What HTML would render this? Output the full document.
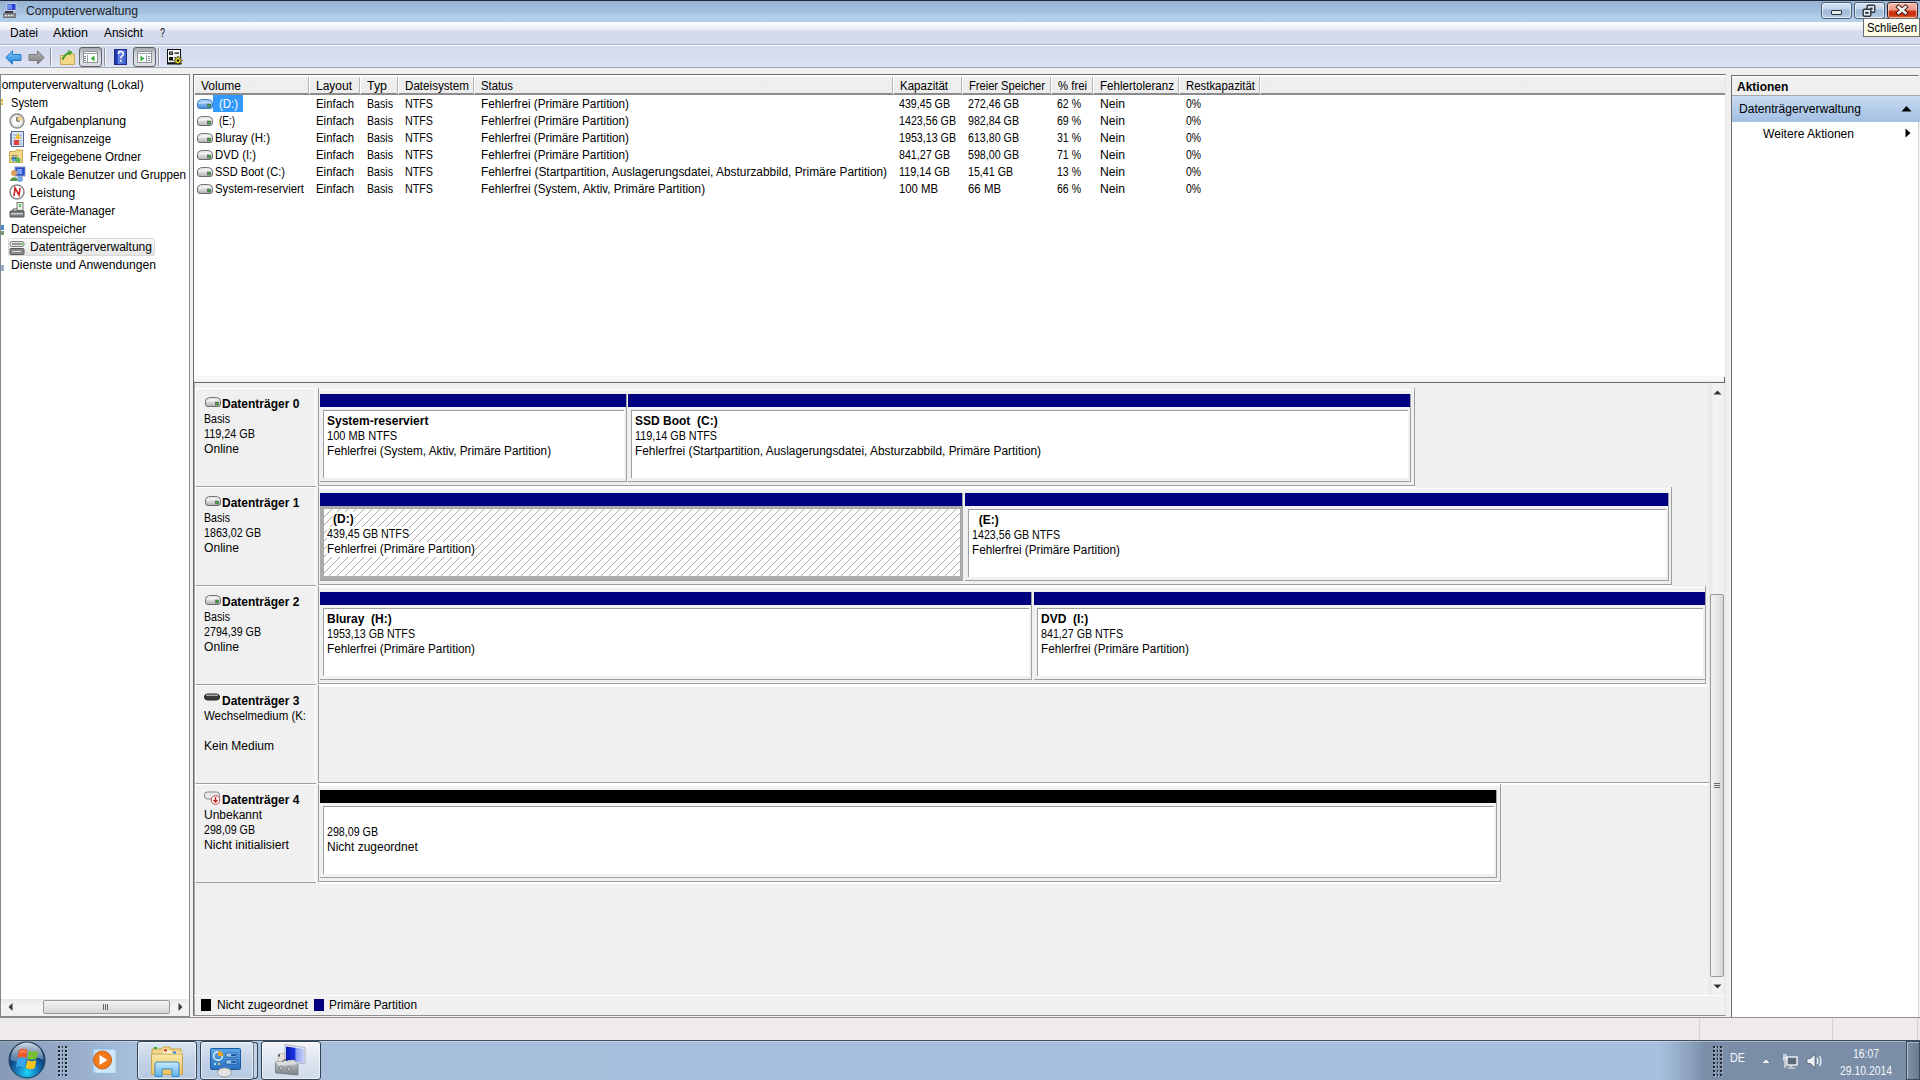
<!DOCTYPE html><html><head><meta charset="utf-8"><title>Computerverwaltung</title><style>
*{margin:0;padding:0;box-sizing:border-box}
html,body{width:1920px;height:1080px;overflow:hidden}
body{position:relative;background:#f0f0f0;font-family:"Liberation Sans",sans-serif;font-size:12px;color:#000}
.a{position:absolute}
.t{position:absolute;line-height:18px;white-space:nowrap}
.b{font-weight:bold}
svg{position:absolute;overflow:visible}
</style></head><body>
<div class="a" style="left:0px;top:0px;width:1920px;height:22px;background:linear-gradient(#1b2b3b 0,#1b2b3b 1px,#9bb3cf 1px,#98b6d5 4px,#a6c2df 13px,#b2cde8 16px,#b4cfe9 22px)"></div>
<svg style="left:2px;top:3px" width="15" height="15" viewBox="0 0 15 15"><rect x="5" y="0.5" width="9" height="7" fill="#2b3fd0" stroke="#c8d0e8" stroke-width="1"/><rect x="6" y="1.5" width="4" height="5" fill="#6d8cf0"/><path d="M3 8 h8 v3 h-8z" fill="#3a3a3a"/><rect x="1.5" y="10.5" width="12" height="4" fill="#8e9499" stroke="#6f7478"/><rect x="3" y="12" width="1.5" height="1" fill="#fff"/><rect x="6" y="12" width="1.5" height="1" fill="#fff"/><rect x="9" y="12" width="1.5" height="1" fill="#fff"/></svg>
<div class="t " style="left:26px;top:2px;transform:scaleX(1.0116);transform-origin:0 0;color:#1b1e2a">Computerverwaltung</div>
<div class="a" style="left:1821px;top:2px;width:31px;height:17px;background:linear-gradient(#d7e4f2 0,#c1d4ea 6px,#a4bcd9 7px,#a7bfdb 11px,#c3d6ec 16px);border:1px solid #4d5f78;border-radius:3px;box-shadow:inset 0 0 0 1px rgba(255,255,255,.55)"></div>
<div class="a" style="left:1854px;top:2px;width:31px;height:17px;background:linear-gradient(#d7e4f2 0,#c1d4ea 6px,#a4bcd9 7px,#a7bfdb 11px,#c3d6ec 16px);border:1px solid #4d5f78;border-radius:3px;box-shadow:inset 0 0 0 1px rgba(255,255,255,.55)"></div>
<div class="a" style="left:1887px;top:2px;width:31px;height:17px;background:linear-gradient(#f4b8aa 0,#eb9a86 7px,#d63a18 8px,#cc2e10 12px,#e88a40 16px);border:1px solid #3c1d1d;border-radius:3px;box-shadow:inset 0 0 0 1px rgba(255,255,255,.55)"></div>
<div class="a" style="left:1831px;top:10px;width:11px;height:5px;background:#e9ecef;border:1px solid #2b3540;border-radius:1px"></div>
<svg style="left:1862px;top:4px" width="14" height="13" viewBox="0 0 14 13"><rect x="5.2" y="1.2" width="7.6" height="7" rx="1.2" fill="#e9ecef" stroke="#2b3540" stroke-width="1.4"/><rect x="8" y="3.6" width="2.6" height="2.2" fill="#2b3540"/><rect x="1.2" y="5.2" width="7.6" height="7" rx="1.2" fill="#e9ecef" stroke="#2b3540" stroke-width="1.4"/><rect x="3.2" y="7.8" width="3.4" height="2" fill="#2b3540"/></svg>
<svg style="left:1895px;top:4px" width="14" height="12" viewBox="0 0 14 12"><path d="M3.5 3 L10.5 9 M10.5 3 L3.5 9" stroke="#4a1810" stroke-width="4.4" stroke-linecap="square"/><path d="M3.5 3 L10.5 9 M10.5 3 L3.5 9" stroke="#f4f4f4" stroke-width="2.4" stroke-linecap="square"/></svg>
<div class="a" style="left:0px;top:22px;width:1920px;height:23px;background:linear-gradient(#fbfcfe 0,#f3f5fa 4px,#e6eaf5 8px,#d6dcee 9px,#d4daee 22px,#a9aeb8 22px)"></div>
<div class="t " style="left:10px;top:24px;">Datei</div>
<div class="t " style="left:53px;top:24px;transform:scaleX(1.0497);transform-origin:0 0;">Aktion</div>
<div class="t " style="left:104px;top:24px;transform:scaleX(0.9913);transform-origin:0 0;">Ansicht</div>
<div class="t " style="left:160px;top:24px;transform:scaleX(0.7494);transform-origin:0 0;">?</div>
<div class="a" style="left:0px;top:45px;width:1920px;height:23px;background:linear-gradient(#ffffff 0,#ffffff 1px,#d4daed 1px,#d7ddf0 12px,#dee4f5 22px,#a3a7b0 22px)"></div>
<svg style="left:5px;top:50px" width="17" height="15" viewBox="0 0 17 15"><defs><linearGradient id="gb" x1="0" y1="0" x2="0" y2="1"><stop offset="0" stop-color="#7fd0f8"/><stop offset="1" stop-color="#1c7fd6"/></linearGradient></defs><path d="M0.8 7.5 L7.5 0.8 V4.5 H16 V10.5 H7.5 V14.2 Z" fill="url(#gb)" stroke="#2a78c8" stroke-width="1"/></svg>
<svg style="left:28px;top:50px" width="17" height="15" viewBox="0 0 17 15"><defs><linearGradient id="gf" x1="0" y1="0" x2="0" y2="1"><stop offset="0" stop-color="#b8b8b8"/><stop offset="1" stop-color="#7c7c7c"/></linearGradient></defs><path d="M16.2 7.5 L9.5 0.8 V4.5 H1 V10.5 H9.5 V14.2 Z" fill="url(#gf)" stroke="#7a7a7a" stroke-width="1"/></svg>
<div class="a" style="left:50px;top:48px;width:1px;height:18px;background:#8e939c"></div>
<div class="a" style="left:51px;top:48px;width:1px;height:18px;background:#f4f6fb"></div>
<div class="a" style="left:104px;top:48px;width:1px;height:18px;background:#8e939c"></div>
<div class="a" style="left:105px;top:48px;width:1px;height:18px;background:#f4f6fb"></div>
<div class="a" style="left:158px;top:48px;width:1px;height:18px;background:#8e939c"></div>
<div class="a" style="left:159px;top:48px;width:1px;height:18px;background:#f4f6fb"></div>
<svg style="left:60px;top:50px" width="16" height="15" viewBox="0 0 16 15"><path d="M0.5 5.5 H6 L7 4 H14.5 V14.5 H0.5Z" fill="#f3d88a" stroke="#c8a850"/><path d="M2 9 C4 5 6 3 9 2 L8 0.5 L12 2 L9.5 5 L9.5 3.5 C7 4 5 6 3 10Z" fill="#3fae2a" stroke="#2b8a1c" stroke-width="0.6"/></svg>
<div class="a" style="left:79px;top:47px;width:23px;height:20px;background:linear-gradient(#a3a7ae,#c9ccd2 5px,#dfe1e5 14px,#d6d8dc);border:1px solid #5f636b;border-radius:3px"></div>
<div class="a" style="left:83px;top:51px;width:15px;height:12px;background:#fff;border:1px solid #8f9499"></div>
<div class="a" style="left:84px;top:53px;width:13px;height:1px;background:#9aa0a6"></div>
<div class="a" style="left:87px;top:55px;width:1px;height:7px;background:#9aa0a6"></div>
<svg style="left:90px;top:55px" width="5" height="7" viewBox="0 0 5 7"><path d="M4.5 0.5 L0.5 3.5 L4.5 6.5Z" fill="#3cae3c"/></svg>
<div class="a" style="left:84px;top:56px;width:2px;height:1px;background:#7d8388"></div>
<div class="a" style="left:84px;top:58px;width:2px;height:1px;background:#7d8388"></div>
<div class="a" style="left:84px;top:60px;width:2px;height:1px;background:#7d8388"></div>
<div class="a" style="left:133px;top:47px;width:23px;height:20px;background:linear-gradient(#a3a7ae,#c9ccd2 5px,#dfe1e5 14px,#d6d8dc);border:1px solid #5f636b;border-radius:3px"></div>
<div class="a" style="left:137px;top:51px;width:15px;height:12px;background:#fff;border:1px solid #8f9499"></div>
<div class="a" style="left:138px;top:53px;width:13px;height:1px;background:#9aa0a6"></div>
<div class="a" style="left:146px;top:55px;width:1px;height:7px;background:#9aa0a6"></div>
<svg style="left:140px;top:55px" width="5" height="7" viewBox="0 0 5 7"><path d="M0.5 0.5 L4.5 3.5 L0.5 6.5Z" fill="#3cae3c"/></svg>
<div class="a" style="left:148px;top:56px;width:2px;height:1px;background:#7d8388"></div>
<div class="a" style="left:148px;top:58px;width:2px;height:1px;background:#7d8388"></div>
<div class="a" style="left:148px;top:60px;width:2px;height:1px;background:#7d8388"></div>
<svg style="left:114px;top:49px" width="13" height="16" viewBox="0 0 13 16"><defs><linearGradient id="hg" x1="0" y1="0" x2="1" y2="0"><stop offset="0" stop-color="#1a2f98"/><stop offset=".25" stop-color="#2a48c0"/><stop offset=".3" stop-color="#6a8ae8"/><stop offset="1" stop-color="#3c5cc8"/></linearGradient></defs><rect x="0.5" y="0.5" width="12" height="15" fill="url(#hg)" stroke="#1c2c88"/><path d="M4.3 5 Q4.3 2.6 6.8 2.6 Q9.3 2.6 9.3 4.9 Q9.3 6.3 7.8 7.2 Q6.9 7.8 6.9 9.4" stroke="#fff" stroke-width="1.5" fill="none"/><circle cx="6.9" cy="12" r="1" fill="#fff"/></svg>
<svg style="left:167px;top:49px" width="17" height="17" viewBox="0 0 17 17"><rect x="0.5" y="0.5" width="13" height="13.5" fill="#f6f6f6" stroke="#111"/><rect x="0" y="13.5" width="14.5" height="2" fill="#111"/><rect x="2" y="2.5" width="4" height="3.5" fill="#111"/><path d="M2.8 3.3 L5.2 5.2 M5.2 3.3 L2.8 5.2" stroke="#fff" stroke-width=".6"/><rect x="7.5" y="3.5" width="4.5" height="1.3" fill="#111"/><rect x="2" y="8" width="4" height="3.5" fill="#111"/><polygon points="15.60,11.50 13.40,12.49 14.25,14.75 11.99,13.90 11.00,16.10 10.01,13.90 7.75,14.75 8.60,12.49 6.40,11.50 8.60,10.51 7.75,8.25 10.01,9.10 11.00,6.90 11.99,9.10 14.25,8.25 13.40,10.51" fill="#f2e628" stroke="#1a1a1a" stroke-width=".7"/><circle cx="11" cy="11.5" r="1.3" fill="#111"/></svg>
<div class="a" style="left:0px;top:74px;width:190px;height:943px;background:#fff;border:1px solid #828790"></div>
<div class="a" style="left:1px;top:75px;width:188px;height:20px;overflow:hidden">
<div class="t " style="left:-8px;top:1px;">Computerverwaltung (Lokal)</div>
</div>
<div class="t " style="left:11px;top:94px;transform:scaleX(0.9250);transform-origin:0 0;">System</div>
<div class="t " style="left:30px;top:112px;transform:scaleX(1.0206);transform-origin:0 0;">Aufgabenplanung</div>
<div class="t " style="left:30px;top:130px;transform:scaleX(0.9486);transform-origin:0 0;">Ereignisanzeige</div>
<div class="t " style="left:30px;top:148px;transform:scaleX(0.9676);transform-origin:0 0;">Freigegebene Ordner</div>
<div class="t " style="left:30px;top:166px;transform:scaleX(0.9746);transform-origin:0 0;">Lokale Benutzer und Gruppen</div>
<div class="t " style="left:30px;top:184px;transform:scaleX(0.9921);transform-origin:0 0;">Leistung</div>
<div class="t " style="left:30px;top:202px;transform:scaleX(0.9656);transform-origin:0 0;">Geräte-Manager</div>
<div class="t " style="left:11px;top:220px;transform:scaleX(0.9693);transform-origin:0 0;">Datenspeicher</div>
<div class="a" style="left:8px;top:238px;width:147px;height:18px;background:linear-gradient(#fafafa,#e6e6e6);border:1px solid #d9d9d9;border-radius:2px"></div>
<div class="t " style="left:30px;top:238px;transform:scaleX(1.0050);transform-origin:0 0;">Datenträgerverwaltung</div>
<div class="t " style="left:11px;top:256px;transform:scaleX(1.0110);transform-origin:0 0;">Dienste und Anwendungen</div>
<div class="a" style="left:1px;top:99px;width:2px;height:3px;background:#e0b830"></div>
<div class="a" style="left:1px;top:103px;width:2px;height:2px;background:#e0b830"></div>
<svg style="left:9px;top:113px" width="16" height="16" viewBox="0 0 16 16"><circle cx="8" cy="8" r="7" fill="#f4f4f4" stroke="#8a8a8a" stroke-width="1.4"/><circle cx="8" cy="8" r="5" fill="#fff" stroke="#d8d8d8"/><path d="M8 4 V8 H11" stroke="#333" stroke-width="1.2" fill="none"/><path d="M9 2.5 A5.5 5.5 0 0 1 13.5 7 L8 8Z" fill="#f4c060" opacity=".7"/></svg>
<svg style="left:10px;top:131px" width="15" height="16" viewBox="0 0 15 16"><rect x="1.5" y="0.5" width="12" height="15" fill="#dfe6f4" stroke="#5a6a90"/><path d="M3 4h9M3 7h9M3 10h9M3 13h9" stroke="#8aa0cc"/><rect x="0" y="2" width="2" height="12" fill="#6b7ca8"/><path d="M8 2 L11 8 H5Z" fill="#f2c22a"/><rect x="4" y="9" width="5" height="5" fill="#e04040"/></svg>
<svg style="left:9px;top:148px" width="16" height="16" viewBox="0 0 16 16"><path d="M0.5 3.5 H6 L7 2 H13.5 V14.5 H0.5Z" fill="#f3d88a" stroke="#c9a84a"/><circle cx="5" cy="11" r="2.5" fill="#4aa0d8"/><circle cx="9" cy="12" r="2.5" fill="#58b858"/><text x="2" y="11" font-size="6" fill="#444" font-family="Liberation Sans">22</text></svg>
<svg style="left:9px;top:166px" width="17" height="17" viewBox="0 0 17 17"><rect x="6" y="1" width="10" height="9" fill="#3050c8" stroke="#8898c8"/><rect x="8" y="3" width="5" height="5" fill="#7aa0f0"/><circle cx="5" cy="7" r="3" fill="#d8a060"/><path d="M1 15 C1 10 9 10 9 15Z" fill="#5a9848"/><circle cx="11" cy="13" r="3" fill="#7aa8d8"/></svg>
<svg style="left:9px;top:184px" width="16" height="16" viewBox="0 0 16 16"><circle cx="8" cy="8" r="7" fill="#fff" stroke="#8a8a8a" stroke-width="1.5"/><path d="M5 12 L6 4 L10 11 L11 4" stroke="#d02020" stroke-width="1.6" fill="none"/></svg>
<svg style="left:9px;top:202px" width="16" height="16" viewBox="0 0 16 16"><rect x="8" y="0.5" width="6" height="8" fill="#eaf0e8" stroke="#777"/><rect x="10" y="2" width="2" height="3" fill="#5c5"/><path d="M1 9 H15 V15 H1Z" fill="#7a7f84" stroke="#555"/><rect x="2" y="11" width="12" height="1.5" fill="#ccc"/><path d="M4 9 V7 H8" stroke="#555" fill="none"/></svg>
<div class="a" style="left:1px;top:225px;width:3px;height:5px;background:#4a90d0"></div>
<div class="a" style="left:1px;top:231px;width:3px;height:4px;background:#7a9a6a"></div>
<svg style="left:9px;top:240px" width="16" height="16" viewBox="0 0 16 16"><rect x="1" y="1.5" width="14" height="5" rx="2" fill="#e8e8e8" stroke="#7a7a7a"/><rect x="1" y="8.5" width="14" height="6" rx="1" fill="#8a8a8a" stroke="#5a5a5a"/><rect x="3" y="3.5" width="9" height="1" fill="#444"/><rect x="3" y="11" width="9" height="1" fill="#ddd"/><rect x="12" y="3" width="2" height="2" fill="#6c6"/></svg>
<div class="a" style="left:1px;top:265px;width:3px;height:6px;background:#9ab0c8"></div>
<div class="a" style="left:1px;top:999px;width:188px;height:17px;background:linear-gradient(#e8e8e8,#f4f4f4 40%,#f0f0f0)"></div>
<div class="a" style="left:43px;top:1000px;width:127px;height:14px;background:linear-gradient(#f4f4f4,#e4e4e4 50%,#d6d6d6);border:1px solid #999;border-radius:2px"></div>
<div class="a" style="left:103px;top:1004px;width:1px;height:6px;background:#666"></div>
<div class="a" style="left:105px;top:1004px;width:1px;height:6px;background:#666"></div>
<div class="a" style="left:107px;top:1004px;width:1px;height:6px;background:#666"></div>
<svg style="left:8px;top:1003px" width="5" height="8" viewBox="0 0 5 8"><path d="M4.5 0 L0.5 4 L4.5 8Z" fill="#3a3a3a"/></svg>
<svg style="left:178px;top:1003px" width="5" height="8" viewBox="0 0 5 8"><path d="M0.5 0 L4.5 4 L0.5 8Z" fill="#3a3a3a"/></svg>
<div class="a" style="left:193px;top:74px;width:1533px;height:942px;background:#f0f0f0;border-left:1px solid #6d6d6d;border-top:1px solid #6d6d6d;border-right:1px solid #e3e3e3;border-bottom:1px solid #8f8f8f"></div>
<div class="a" style="left:194px;top:75px;width:1px;height:940px;background:#a9a9a9"></div>
<div class="a" style="left:194px;top:75px;width:1531px;height:301px;background:#fff"></div>
<div class="a" style="left:195px;top:76px;width:1530px;height:19px;background:linear-gradient(#fdfdfd 0,#fdfdfd 1px,#f0f0f0 1px,#ececec 17px,#8c8c8c 17px,#8c8c8c 19px)"></div>
<div class="a" style="left:308px;top:77px;width:1px;height:17px;background:#b6b6b6"></div>
<div class="a" style="left:309px;top:77px;width:1px;height:17px;background:#fff"></div>
<div class="a" style="left:359px;top:77px;width:1px;height:17px;background:#b6b6b6"></div>
<div class="a" style="left:360px;top:77px;width:1px;height:17px;background:#fff"></div>
<div class="a" style="left:397px;top:77px;width:1px;height:17px;background:#b6b6b6"></div>
<div class="a" style="left:398px;top:77px;width:1px;height:17px;background:#fff"></div>
<div class="a" style="left:473px;top:77px;width:1px;height:17px;background:#b6b6b6"></div>
<div class="a" style="left:474px;top:77px;width:1px;height:17px;background:#fff"></div>
<div class="a" style="left:892px;top:77px;width:1px;height:17px;background:#b6b6b6"></div>
<div class="a" style="left:893px;top:77px;width:1px;height:17px;background:#fff"></div>
<div class="a" style="left:961px;top:77px;width:1px;height:17px;background:#b6b6b6"></div>
<div class="a" style="left:962px;top:77px;width:1px;height:17px;background:#fff"></div>
<div class="a" style="left:1050px;top:77px;width:1px;height:17px;background:#b6b6b6"></div>
<div class="a" style="left:1051px;top:77px;width:1px;height:17px;background:#fff"></div>
<div class="a" style="left:1092px;top:77px;width:1px;height:17px;background:#b6b6b6"></div>
<div class="a" style="left:1093px;top:77px;width:1px;height:17px;background:#fff"></div>
<div class="a" style="left:1178px;top:77px;width:1px;height:17px;background:#b6b6b6"></div>
<div class="a" style="left:1179px;top:77px;width:1px;height:17px;background:#fff"></div>
<div class="a" style="left:1259px;top:77px;width:1px;height:17px;background:#b6b6b6"></div>
<div class="a" style="left:1260px;top:77px;width:1px;height:17px;background:#fff"></div>
<div class="t " style="left:201px;top:77px;">Volume</div>
<div class="t " style="left:316px;top:77px;">Layout</div>
<div class="t " style="left:367px;top:77px;transform:scaleX(1.0339);transform-origin:0 0;">Typ</div>
<div class="t " style="left:405px;top:77px;transform:scaleX(0.9695);transform-origin:0 0;">Dateisystem</div>
<div class="t " style="left:481px;top:77px;transform:scaleX(0.9412);transform-origin:0 0;">Status</div>
<div class="t " style="left:900px;top:77px;transform:scaleX(0.9597);transform-origin:0 0;">Kapazität</div>
<div class="t " style="left:969px;top:77px;transform:scaleX(0.9265);transform-origin:0 0;">Freier Speicher</div>
<div class="t " style="left:1058px;top:77px;transform:scaleX(0.9455);transform-origin:0 0;">% frei</div>
<div class="t " style="left:1100px;top:77px;transform:scaleX(0.9648);transform-origin:0 0;">Fehlertoleranz</div>
<div class="t " style="left:1186px;top:77px;transform:scaleX(0.9493);transform-origin:0 0;">Restkapazität</div>
<div class="a" style="left:213px;top:95px;width:30px;height:17px;background:#3399ff"></div>
<div class="t " style="left:219px;top:95px;transform:scaleX(0.9500);transform-origin:0 0;color:#fff">(D:)</div>
<div class="t " style="left:316px;top:95px;transform:scaleX(0.9496);transform-origin:0 0;">Einfach</div>
<div class="t " style="left:367px;top:95px;transform:scaleX(0.8860);transform-origin:0 0;">Basis</div>
<div class="t " style="left:405px;top:95px;transform:scaleX(0.8938);transform-origin:0 0;">NTFS</div>
<div class="t " style="left:481px;top:95px;transform:scaleX(0.9777);transform-origin:0 0;">Fehlerfrei (Primäre Partition)</div>
<div class="t " style="left:899px;top:95px;transform:scaleX(0.8894);transform-origin:0 0;">439,45 GB</div>
<div class="t " style="left:968px;top:95px;transform:scaleX(0.8894);transform-origin:0 0;">272,46 GB</div>
<div class="t " style="left:1057px;top:95px;transform:scaleX(0.8777);transform-origin:0 0;">62 %</div>
<div class="t " style="left:1100px;top:95px;transform:scaleX(1.0127);transform-origin:0 0;">Nein</div>
<div class="t " style="left:1186px;top:95px;transform:scaleX(0.8649);transform-origin:0 0;">0%</div>
<svg style="left:197px;top:99px" width="16" height="10" viewBox="0 0 16 10"><defs><linearGradient id="dg1" x1="0" y1="0" x2="0" y2="1"><stop offset="0" stop-color="#b8dcfc"/><stop offset=".45" stop-color="#7ab8f0"/><stop offset="1" stop-color="#4a8ad8"/></linearGradient></defs><path d="M0.5 5 Q0.5 1.2 3.5 0.8 Q8 0.2 12.5 0.8 Q15.5 1.2 15.5 5 V7 Q15.5 9.5 13 9.5 H3 Q0.5 9.5 0.5 7Z" fill="url(#dg1)" stroke="#3a78c0"/><path d="M1.2 4.2 Q8 3.2 14.8 4.2" stroke="#fff" stroke-opacity=".8" fill="none"/><rect x="10.5" y="5" width="3" height="3" fill="#3aa63a" stroke="#4a5a4a" stroke-width=".6"/></svg>
<div class="t " style="left:219px;top:112px;transform:scaleX(0.8278);transform-origin:0 0;">(E:)</div>
<div class="t " style="left:316px;top:112px;transform:scaleX(0.9496);transform-origin:0 0;">Einfach</div>
<div class="t " style="left:367px;top:112px;transform:scaleX(0.8860);transform-origin:0 0;">Basis</div>
<div class="t " style="left:405px;top:112px;transform:scaleX(0.8938);transform-origin:0 0;">NTFS</div>
<div class="t " style="left:481px;top:112px;transform:scaleX(0.9777);transform-origin:0 0;">Fehlerfrei (Primäre Partition)</div>
<div class="t " style="left:899px;top:112px;transform:scaleX(0.8904);transform-origin:0 0;">1423,56 GB</div>
<div class="t " style="left:968px;top:112px;transform:scaleX(0.8894);transform-origin:0 0;">982,84 GB</div>
<div class="t " style="left:1057px;top:112px;transform:scaleX(0.8777);transform-origin:0 0;">69 %</div>
<div class="t " style="left:1100px;top:112px;transform:scaleX(1.0127);transform-origin:0 0;">Nein</div>
<div class="t " style="left:1186px;top:112px;transform:scaleX(0.8649);transform-origin:0 0;">0%</div>
<svg style="left:197px;top:116px" width="16" height="10" viewBox="0 0 16 10"><defs><linearGradient id="dg2" x1="0" y1="0" x2="0" y2="1"><stop offset="0" stop-color="#fbfbfb"/><stop offset=".45" stop-color="#dedede"/><stop offset="1" stop-color="#b4b4b4"/></linearGradient></defs><path d="M0.5 5 Q0.5 1.2 3.5 0.8 Q8 0.2 12.5 0.8 Q15.5 1.2 15.5 5 V7 Q15.5 9.5 13 9.5 H3 Q0.5 9.5 0.5 7Z" fill="url(#dg2)" stroke="#6a6a6a"/><path d="M1.2 4.2 Q8 3.2 14.8 4.2" stroke="#fff" stroke-opacity=".8" fill="none"/><rect x="10.5" y="5" width="3" height="3" fill="#3aa63a" stroke="#4a5a4a" stroke-width=".6"/></svg>
<div class="t " style="left:215px;top:129px;transform:scaleX(0.9591);transform-origin:0 0;">Bluray (H:)</div>
<div class="t " style="left:316px;top:129px;transform:scaleX(0.9496);transform-origin:0 0;">Einfach</div>
<div class="t " style="left:367px;top:129px;transform:scaleX(0.8860);transform-origin:0 0;">Basis</div>
<div class="t " style="left:405px;top:129px;transform:scaleX(0.8938);transform-origin:0 0;">NTFS</div>
<div class="t " style="left:481px;top:129px;transform:scaleX(0.9777);transform-origin:0 0;">Fehlerfrei (Primäre Partition)</div>
<div class="t " style="left:899px;top:129px;transform:scaleX(0.8904);transform-origin:0 0;">1953,13 GB</div>
<div class="t " style="left:968px;top:129px;transform:scaleX(0.8894);transform-origin:0 0;">613,80 GB</div>
<div class="t " style="left:1057px;top:129px;transform:scaleX(0.8777);transform-origin:0 0;">31 %</div>
<div class="t " style="left:1100px;top:129px;transform:scaleX(1.0127);transform-origin:0 0;">Nein</div>
<div class="t " style="left:1186px;top:129px;transform:scaleX(0.8649);transform-origin:0 0;">0%</div>
<svg style="left:197px;top:133px" width="16" height="10" viewBox="0 0 16 10"><defs><linearGradient id="dg3" x1="0" y1="0" x2="0" y2="1"><stop offset="0" stop-color="#fbfbfb"/><stop offset=".45" stop-color="#dedede"/><stop offset="1" stop-color="#b4b4b4"/></linearGradient></defs><path d="M0.5 5 Q0.5 1.2 3.5 0.8 Q8 0.2 12.5 0.8 Q15.5 1.2 15.5 5 V7 Q15.5 9.5 13 9.5 H3 Q0.5 9.5 0.5 7Z" fill="url(#dg3)" stroke="#6a6a6a"/><path d="M1.2 4.2 Q8 3.2 14.8 4.2" stroke="#fff" stroke-opacity=".8" fill="none"/><rect x="10.5" y="5" width="3" height="3" fill="#3aa63a" stroke="#4a5a4a" stroke-width=".6"/></svg>
<div class="t " style="left:215px;top:146px;transform:scaleX(0.9463);transform-origin:0 0;">DVD (I:)</div>
<div class="t " style="left:316px;top:146px;transform:scaleX(0.9496);transform-origin:0 0;">Einfach</div>
<div class="t " style="left:367px;top:146px;transform:scaleX(0.8860);transform-origin:0 0;">Basis</div>
<div class="t " style="left:405px;top:146px;transform:scaleX(0.8938);transform-origin:0 0;">NTFS</div>
<div class="t " style="left:481px;top:146px;transform:scaleX(0.9777);transform-origin:0 0;">Fehlerfrei (Primäre Partition)</div>
<div class="t " style="left:899px;top:146px;transform:scaleX(0.8894);transform-origin:0 0;">841,27 GB</div>
<div class="t " style="left:968px;top:146px;transform:scaleX(0.8894);transform-origin:0 0;">598,00 GB</div>
<div class="t " style="left:1057px;top:146px;transform:scaleX(0.8777);transform-origin:0 0;">71 %</div>
<div class="t " style="left:1100px;top:146px;transform:scaleX(1.0127);transform-origin:0 0;">Nein</div>
<div class="t " style="left:1186px;top:146px;transform:scaleX(0.8649);transform-origin:0 0;">0%</div>
<svg style="left:197px;top:150px" width="16" height="10" viewBox="0 0 16 10"><defs><linearGradient id="dg4" x1="0" y1="0" x2="0" y2="1"><stop offset="0" stop-color="#fbfbfb"/><stop offset=".45" stop-color="#dedede"/><stop offset="1" stop-color="#b4b4b4"/></linearGradient></defs><path d="M0.5 5 Q0.5 1.2 3.5 0.8 Q8 0.2 12.5 0.8 Q15.5 1.2 15.5 5 V7 Q15.5 9.5 13 9.5 H3 Q0.5 9.5 0.5 7Z" fill="url(#dg4)" stroke="#6a6a6a"/><path d="M1.2 4.2 Q8 3.2 14.8 4.2" stroke="#fff" stroke-opacity=".8" fill="none"/><rect x="10.5" y="5" width="3" height="3" fill="#3aa63a" stroke="#4a5a4a" stroke-width=".6"/></svg>
<div class="t " style="left:215px;top:163px;transform:scaleX(0.9211);transform-origin:0 0;">SSD Boot (C:)</div>
<div class="t " style="left:316px;top:163px;transform:scaleX(0.9496);transform-origin:0 0;">Einfach</div>
<div class="t " style="left:367px;top:163px;transform:scaleX(0.8860);transform-origin:0 0;">Basis</div>
<div class="t " style="left:405px;top:163px;transform:scaleX(0.8938);transform-origin:0 0;">NTFS</div>
<div class="t " style="left:481px;top:163px;transform:scaleX(0.9899);transform-origin:0 0;">Fehlerfrei (Startpartition, Auslagerungsdatei, Absturzabbild, Primäre Partition)</div>
<div class="t " style="left:899px;top:163px;transform:scaleX(0.9034);transform-origin:0 0;">119,14 GB</div>
<div class="t " style="left:968px;top:163px;transform:scaleX(0.8881);transform-origin:0 0;">15,41 GB</div>
<div class="t " style="left:1057px;top:163px;transform:scaleX(0.8777);transform-origin:0 0;">13 %</div>
<div class="t " style="left:1100px;top:163px;transform:scaleX(1.0127);transform-origin:0 0;">Nein</div>
<div class="t " style="left:1186px;top:163px;transform:scaleX(0.8649);transform-origin:0 0;">0%</div>
<svg style="left:197px;top:167px" width="16" height="10" viewBox="0 0 16 10"><defs><linearGradient id="dg5" x1="0" y1="0" x2="0" y2="1"><stop offset="0" stop-color="#fbfbfb"/><stop offset=".45" stop-color="#dedede"/><stop offset="1" stop-color="#b4b4b4"/></linearGradient></defs><path d="M0.5 5 Q0.5 1.2 3.5 0.8 Q8 0.2 12.5 0.8 Q15.5 1.2 15.5 5 V7 Q15.5 9.5 13 9.5 H3 Q0.5 9.5 0.5 7Z" fill="url(#dg5)" stroke="#6a6a6a"/><path d="M1.2 4.2 Q8 3.2 14.8 4.2" stroke="#fff" stroke-opacity=".8" fill="none"/><rect x="10.5" y="5" width="3" height="3" fill="#3aa63a" stroke="#4a5a4a" stroke-width=".6"/></svg>
<div class="t " style="left:215px;top:180px;transform:scaleX(0.9467);transform-origin:0 0;">System-reserviert</div>
<div class="t " style="left:316px;top:180px;transform:scaleX(0.9496);transform-origin:0 0;">Einfach</div>
<div class="t " style="left:367px;top:180px;transform:scaleX(0.8860);transform-origin:0 0;">Basis</div>
<div class="t " style="left:405px;top:180px;transform:scaleX(0.8938);transform-origin:0 0;">NTFS</div>
<div class="t " style="left:481px;top:180px;transform:scaleX(0.9776);transform-origin:0 0;">Fehlerfrei (System, Aktiv, Primäre Partition)</div>
<div class="t " style="left:899px;top:180px;transform:scaleX(0.9433);transform-origin:0 0;">100 MB</div>
<div class="t " style="left:968px;top:180px;transform:scaleX(0.9518);transform-origin:0 0;">66 MB</div>
<div class="t " style="left:1057px;top:180px;transform:scaleX(0.8777);transform-origin:0 0;">66 %</div>
<div class="t " style="left:1100px;top:180px;transform:scaleX(1.0127);transform-origin:0 0;">Nein</div>
<div class="t " style="left:1186px;top:180px;transform:scaleX(0.8649);transform-origin:0 0;">0%</div>
<svg style="left:197px;top:184px" width="16" height="10" viewBox="0 0 16 10"><defs><linearGradient id="dg6" x1="0" y1="0" x2="0" y2="1"><stop offset="0" stop-color="#fbfbfb"/><stop offset=".45" stop-color="#dedede"/><stop offset="1" stop-color="#b4b4b4"/></linearGradient></defs><path d="M0.5 5 Q0.5 1.2 3.5 0.8 Q8 0.2 12.5 0.8 Q15.5 1.2 15.5 5 V7 Q15.5 9.5 13 9.5 H3 Q0.5 9.5 0.5 7Z" fill="url(#dg6)" stroke="#6a6a6a"/><path d="M1.2 4.2 Q8 3.2 14.8 4.2" stroke="#fff" stroke-opacity=".8" fill="none"/><rect x="10.5" y="5" width="3" height="3" fill="#3aa63a" stroke="#4a5a4a" stroke-width=".6"/></svg>
<div class="a" style="left:194px;top:376px;width:1531px;height:6px;background:linear-gradient(#f4f4f4,#fafafa 3px,#ececec)"></div>
<div class="a" style="left:194px;top:382px;width:1531px;height:1px;background:#6a6a6a"></div>
<div class="a" style="left:1724px;top:377px;width:1px;height:6px;background:#6a6a6a"></div>
<div class="a" style="left:195px;top:388px;width:121px;height:99px;border-top:1px solid #fff;border-left:1px solid #fff;border-bottom:1px solid #a0a0a0"></div>
<div class="a" style="left:315px;top:388px;width:1px;height:98px;background:#fff"></div>
<div class="a" style="left:318px;top:388px;width:1097px;height:98px;border-left:1px solid #a0a0a0;border-right:1px solid #a0a0a0;border-bottom:1px solid #a0a0a0"></div>
<div class="a" style="left:319px;top:389px;width:1095px;height:1px;background:#fff"></div>
<div class="a" style="left:319px;top:486px;width:1096px;height:2px;background:#fff"></div>
<div class="t b" style="left:222px;top:395px;">Datenträger 0</div>
<div class="t " style="left:204px;top:410px;transform:scaleX(0.8860);transform-origin:0 0;">Basis</div>
<div class="t " style="left:204px;top:425px;transform:scaleX(0.9034);transform-origin:0 0;">119,24 GB</div>
<div class="t " style="left:204px;top:440px;transform:scaleX(1.0090);transform-origin:0 0;">Online</div>
<svg style="left:205px;top:397px" width="16" height="10" viewBox="0 0 16 10"><defs><linearGradient id="dg7" x1="0" y1="0" x2="0" y2="1"><stop offset="0" stop-color="#fbfbfb"/><stop offset=".45" stop-color="#dedede"/><stop offset="1" stop-color="#b4b4b4"/></linearGradient></defs><path d="M0.5 5 Q0.5 1.2 3.5 0.8 Q8 0.2 12.5 0.8 Q15.5 1.2 15.5 5 V7 Q15.5 9.5 13 9.5 H3 Q0.5 9.5 0.5 7Z" fill="url(#dg7)" stroke="#6a6a6a"/><path d="M1.2 4.2 Q8 3.2 14.8 4.2" stroke="#fff" stroke-opacity=".8" fill="none"/><rect x="10.5" y="5" width="3" height="3" fill="#3aa63a" stroke="#4a5a4a" stroke-width=".6"/></svg>
<div class="a" style="left:320px;top:394px;width:306px;height:13px;background:#000080"></div>
<div class="a" style="left:320px;top:407px;width:306px;height:2px;background:#f4f4fc"></div>
<div class="a" style="left:626px;top:394px;width:1px;height:88px;background:#a0a0a0"></div>
<div class="a" style="left:320px;top:481px;width:307px;height:1px;background:#a0a0a0"></div>
<div class="a" style="left:323px;top:410px;width:301px;height:68px;background:#fff;border-left:1px solid #a0a0a0;border-top:1px solid #a0a0a0"></div>
<div class="t b" style="left:327px;top:412px;">System-reserviert</div>
<div class="t " style="left:327px;top:427px;transform:scaleX(0.9211);transform-origin:0 0;">100 MB NTFS</div>
<div class="t " style="left:327px;top:442px;transform:scaleX(0.9776);transform-origin:0 0;">Fehlerfrei (System, Aktiv, Primäre Partition)</div>
<div class="a" style="left:628px;top:394px;width:782px;height:13px;background:#000080"></div>
<div class="a" style="left:628px;top:407px;width:782px;height:2px;background:#f4f4fc"></div>
<div class="a" style="left:1410px;top:394px;width:1px;height:88px;background:#a0a0a0"></div>
<div class="a" style="left:628px;top:481px;width:783px;height:1px;background:#a0a0a0"></div>
<div class="a" style="left:631px;top:410px;width:777px;height:68px;background:#fff;border-left:1px solid #a0a0a0;border-top:1px solid #a0a0a0"></div>
<div class="t b" style="left:635px;top:412px;">SSD Boot&nbsp; (C:)</div>
<div class="t " style="left:635px;top:427px;transform:scaleX(0.9000);transform-origin:0 0;">119,14 GB NTFS</div>
<div class="t " style="left:635px;top:442px;transform:scaleX(0.9899);transform-origin:0 0;">Fehlerfrei (Startpartition, Auslagerungsdatei, Absturzabbild, Primäre Partition)</div>
<div class="a" style="left:195px;top:487px;width:121px;height:99px;border-top:1px solid #fff;border-left:1px solid #fff;border-bottom:1px solid #a0a0a0"></div>
<div class="a" style="left:315px;top:487px;width:1px;height:98px;background:#fff"></div>
<div class="a" style="left:318px;top:487px;width:1354px;height:98px;border-left:1px solid #a0a0a0;border-right:1px solid #a0a0a0;border-bottom:1px solid #a0a0a0"></div>
<div class="a" style="left:319px;top:488px;width:1352px;height:1px;background:#fff"></div>
<div class="a" style="left:319px;top:585px;width:1353px;height:2px;background:#fff"></div>
<div class="t b" style="left:222px;top:494px;">Datenträger 1</div>
<div class="t " style="left:204px;top:509px;transform:scaleX(0.8860);transform-origin:0 0;">Basis</div>
<div class="t " style="left:204px;top:524px;transform:scaleX(0.8904);transform-origin:0 0;">1863,02 GB</div>
<div class="t " style="left:204px;top:539px;transform:scaleX(1.0090);transform-origin:0 0;">Online</div>
<svg style="left:205px;top:496px" width="16" height="10" viewBox="0 0 16 10"><defs><linearGradient id="dg8" x1="0" y1="0" x2="0" y2="1"><stop offset="0" stop-color="#fbfbfb"/><stop offset=".45" stop-color="#dedede"/><stop offset="1" stop-color="#b4b4b4"/></linearGradient></defs><path d="M0.5 5 Q0.5 1.2 3.5 0.8 Q8 0.2 12.5 0.8 Q15.5 1.2 15.5 5 V7 Q15.5 9.5 13 9.5 H3 Q0.5 9.5 0.5 7Z" fill="url(#dg8)" stroke="#6a6a6a"/><path d="M1.2 4.2 Q8 3.2 14.8 4.2" stroke="#fff" stroke-opacity=".8" fill="none"/><rect x="10.5" y="5" width="3" height="3" fill="#3aa63a" stroke="#4a5a4a" stroke-width=".6"/></svg>
<div class="a" style="left:320px;top:493px;width:642px;height:13px;background:#000080"></div>
<div class="a" style="left:320px;top:506px;width:642px;height:2px;background:#f4f4fc"></div>
<div class="a" style="left:962px;top:493px;width:1px;height:88px;background:#a0a0a0"></div>
<div class="a" style="left:320px;top:580px;width:643px;height:1px;background:#a0a0a0"></div>
<div class="a" style="left:320px;top:506px;width:643px;height:74px;background:#ababab"></div>
<svg style="left:324px;top:509px" width="636" height="67"><defs><pattern id="hp" width="8" height="8" patternUnits="userSpaceOnUse"><rect width="8" height="8" fill="#fff"/><path d="M-1 9 L9 -1 M-1 1 L1 -1 M7 9 L9 7" stroke="#a4a4a4" stroke-width="1"/></pattern></defs><rect width="636" height="67" fill="url(#hp)"/></svg>
<div class="t b" style="left:333px;top:512px;line-height:15px;background:#fff">(D:)</div>
<div class="t " style="left:327px;top:525px;transform:scaleX(0.8913);transform-origin:0 0;line-height:15px;background:#fff;top:527px">439,45 GB NTFS</div>
<div class="t " style="left:327px;top:540px;transform:scaleX(0.9777);transform-origin:0 0;line-height:15px;background:#fff;top:542px">Fehlerfrei (Primäre Partition)</div>
<div class="a" style="left:965px;top:493px;width:703px;height:13px;background:#000080"></div>
<div class="a" style="left:965px;top:506px;width:703px;height:2px;background:#f4f4fc"></div>
<div class="a" style="left:1668px;top:493px;width:1px;height:88px;background:#a0a0a0"></div>
<div class="a" style="left:965px;top:580px;width:704px;height:1px;background:#a0a0a0"></div>
<div class="a" style="left:968px;top:509px;width:698px;height:68px;background:#fff;border-left:1px solid #a0a0a0;border-top:1px solid #a0a0a0"></div>
<div class="t b" style="left:972px;top:511px;">&nbsp;&nbsp;(E:)</div>
<div class="t " style="left:972px;top:526px;transform:scaleX(0.8918);transform-origin:0 0;">1423,56 GB NTFS</div>
<div class="t " style="left:972px;top:541px;transform:scaleX(0.9777);transform-origin:0 0;">Fehlerfrei (Primäre Partition)</div>
<div class="a" style="left:195px;top:586px;width:121px;height:99px;border-top:1px solid #fff;border-left:1px solid #fff;border-bottom:1px solid #a0a0a0"></div>
<div class="a" style="left:315px;top:586px;width:1px;height:98px;background:#fff"></div>
<div class="a" style="left:318px;top:586px;width:1388px;height:98px;border-left:1px solid #a0a0a0;border-right:1px solid #a0a0a0;border-bottom:1px solid #a0a0a0"></div>
<div class="a" style="left:319px;top:587px;width:1386px;height:1px;background:#fff"></div>
<div class="a" style="left:319px;top:684px;width:1387px;height:2px;background:#fff"></div>
<div class="t b" style="left:222px;top:593px;">Datenträger 2</div>
<div class="t " style="left:204px;top:608px;transform:scaleX(0.8860);transform-origin:0 0;">Basis</div>
<div class="t " style="left:204px;top:623px;transform:scaleX(0.8904);transform-origin:0 0;">2794,39 GB</div>
<div class="t " style="left:204px;top:638px;transform:scaleX(1.0090);transform-origin:0 0;">Online</div>
<svg style="left:205px;top:595px" width="16" height="10" viewBox="0 0 16 10"><defs><linearGradient id="dg9" x1="0" y1="0" x2="0" y2="1"><stop offset="0" stop-color="#fbfbfb"/><stop offset=".45" stop-color="#dedede"/><stop offset="1" stop-color="#b4b4b4"/></linearGradient></defs><path d="M0.5 5 Q0.5 1.2 3.5 0.8 Q8 0.2 12.5 0.8 Q15.5 1.2 15.5 5 V7 Q15.5 9.5 13 9.5 H3 Q0.5 9.5 0.5 7Z" fill="url(#dg9)" stroke="#6a6a6a"/><path d="M1.2 4.2 Q8 3.2 14.8 4.2" stroke="#fff" stroke-opacity=".8" fill="none"/><rect x="10.5" y="5" width="3" height="3" fill="#3aa63a" stroke="#4a5a4a" stroke-width=".6"/></svg>
<div class="a" style="left:320px;top:592px;width:711px;height:13px;background:#000080"></div>
<div class="a" style="left:320px;top:605px;width:711px;height:2px;background:#f4f4fc"></div>
<div class="a" style="left:1031px;top:592px;width:1px;height:88px;background:#a0a0a0"></div>
<div class="a" style="left:320px;top:679px;width:712px;height:1px;background:#a0a0a0"></div>
<div class="a" style="left:323px;top:608px;width:706px;height:68px;background:#fff;border-left:1px solid #a0a0a0;border-top:1px solid #a0a0a0"></div>
<div class="t b" style="left:327px;top:610px;">Bluray&nbsp; (H:)</div>
<div class="t " style="left:327px;top:625px;transform:scaleX(0.8918);transform-origin:0 0;">1953,13 GB NTFS</div>
<div class="t " style="left:327px;top:640px;transform:scaleX(0.9777);transform-origin:0 0;">Fehlerfrei (Primäre Partition)</div>
<div class="a" style="left:1034px;top:592px;width:671px;height:13px;background:#000080"></div>
<div class="a" style="left:1034px;top:605px;width:671px;height:2px;background:#f4f4fc"></div>
<div class="a" style="left:1705px;top:592px;width:1px;height:88px;background:#a0a0a0"></div>
<div class="a" style="left:1034px;top:679px;width:672px;height:1px;background:#a0a0a0"></div>
<div class="a" style="left:1037px;top:608px;width:666px;height:68px;background:#fff;border-left:1px solid #a0a0a0;border-top:1px solid #a0a0a0"></div>
<div class="t b" style="left:1041px;top:610px;">DVD&nbsp; (I:)</div>
<div class="t " style="left:1041px;top:625px;transform:scaleX(0.8913);transform-origin:0 0;">841,27 GB NTFS</div>
<div class="t " style="left:1041px;top:640px;transform:scaleX(0.9777);transform-origin:0 0;">Fehlerfrei (Primäre Partition)</div>
<div class="a" style="left:195px;top:685px;width:121px;height:99px;border-top:1px solid #fff;border-left:1px solid #fff;border-bottom:1px solid #a0a0a0"></div>
<div class="a" style="left:315px;top:685px;width:1px;height:98px;background:#fff"></div>
<div class="a" style="left:318px;top:685px;width:1391px;height:98px;border-left:1px solid #a0a0a0;border-right:none;border-bottom:1px solid #a0a0a0"></div>
<div class="a" style="left:319px;top:686px;width:1389px;height:1px;background:#fff"></div>
<div class="a" style="left:319px;top:783px;width:1390px;height:2px;background:#fff"></div>
<div class="t b" style="left:222px;top:692px;">Datenträger 3</div>
<div class="t " style="left:204px;top:707px;transform:scaleX(0.9520);transform-origin:0 0;">Wechselmedium (K:</div>
<div class="t " style="left:204px;top:737px;">Kein Medium</div>
<svg style="left:204px;top:693px" width="16" height="8" viewBox="0 0 16 8"><rect x="0.5" y="1" width="15" height="6" rx="3" fill="#3a3a3a" stroke="#222"/><rect x="2" y="1.5" width="12" height="1.5" fill="#aaa"/></svg>
<div class="a" style="left:195px;top:784px;width:121px;height:99px;border-top:1px solid #fff;border-left:1px solid #fff;border-bottom:1px solid #a0a0a0"></div>
<div class="a" style="left:315px;top:784px;width:1px;height:98px;background:#fff"></div>
<div class="a" style="left:318px;top:784px;width:1183px;height:98px;border-left:1px solid #a0a0a0;border-right:1px solid #a0a0a0;border-bottom:1px solid #a0a0a0"></div>
<div class="a" style="left:319px;top:785px;width:1181px;height:1px;background:#fff"></div>
<div class="a" style="left:319px;top:882px;width:1182px;height:2px;background:#fff"></div>
<div class="t b" style="left:222px;top:791px;">Datenträger 4</div>
<div class="t " style="left:204px;top:806px;">Unbekannt</div>
<div class="t " style="left:204px;top:821px;transform:scaleX(0.8894);transform-origin:0 0;">298,09 GB</div>
<div class="t " style="left:204px;top:836px;transform:scaleX(1.0195);transform-origin:0 0;">Nicht initialisiert</div>
<svg style="left:204px;top:791px" width="17" height="14" viewBox="0 0 17 14"><rect x="0.5" y="1" width="15" height="7" rx="3" fill="#e8e8e8" stroke="#888"/><circle cx="11.5" cy="9" r="4.3" fill="#fff" stroke="#c04040"/><path d="M11.5 6 V11 M9.5 9 L11.5 11 L13.5 9" stroke="#c02020" stroke-width="1.4" fill="none"/></svg>
<div class="a" style="left:320px;top:790px;width:1176px;height:13px;background:#000000"></div>
<div class="a" style="left:320px;top:803px;width:1176px;height:2px;background:#f4f4fc"></div>
<div class="a" style="left:1496px;top:790px;width:1px;height:88px;background:#a0a0a0"></div>
<div class="a" style="left:320px;top:877px;width:1177px;height:1px;background:#a0a0a0"></div>
<div class="a" style="left:323px;top:806px;width:1171px;height:68px;background:#fff;border-left:1px solid #a0a0a0;border-top:1px solid #a0a0a0"></div>
<div class="t " style="left:327px;top:823px;transform:scaleX(0.8894);transform-origin:0 0;">298,09 GB</div>
<div class="t " style="left:327px;top:838px;">Nicht zugeordnet</div>
<div class="a" style="left:1709px;top:383px;width:17px;height:612px;background:linear-gradient(90deg,#e6e6e6,#f2f2f2 30%,#f0f0f0 80%,#e6e6e6)"></div>
<svg style="left:1713px;top:390px" width="9" height="5" viewBox="0 0 9 5"><path d="M0.5 4.5 L4.5 0.5 L8.5 4.5Z" fill="#333"/></svg>
<svg style="left:1713px;top:984px" width="9" height="5" viewBox="0 0 9 5"><path d="M0.5 0.5 L4.5 4.5 L8.5 0.5Z" fill="#333"/></svg>
<div class="a" style="left:1710px;top:594px;width:14px;height:383px;background:linear-gradient(90deg,#f2f2f2,#e8e8e8 50%,#d4d4d4);border:1px solid #9b9b9b;border-radius:2px"></div>
<div class="a" style="left:1714px;top:783px;width:6px;height:1px;background:#6a6a6a"></div>
<div class="a" style="left:1714px;top:785px;width:6px;height:1px;background:#6a6a6a"></div>
<div class="a" style="left:1714px;top:787px;width:6px;height:1px;background:#6a6a6a"></div>
<div class="a" style="left:194px;top:995px;width:1531px;height:1px;background:#fcfcfc"></div>
<div class="a" style="left:201px;top:999px;width:10px;height:12px;background:#000"></div>
<div class="t " style="left:217px;top:996px;">Nicht zugeordnet</div>
<div class="a" style="left:314px;top:999px;width:10px;height:12px;background:#000080"></div>
<div class="t " style="left:329px;top:996px;transform:scaleX(0.9848);transform-origin:0 0;">Primäre Partition</div>
<div class="a" style="left:1731px;top:75px;width:188px;height:943px;background:#fff;border-left:1px solid #6d6d6d;border-top:1px solid #6d6d6d;border-right:1px solid #d8d8d8;border-bottom:1px solid #8f8f8f"></div>
<div class="a" style="left:1732px;top:76px;width:1186px;height:1px;background:#fff"></div>
<div class="a" style="left:1732px;top:77px;width:1186px;height:19px;background:#f0f0f0;border-bottom:1px solid #a8a8a8"></div>
<div class="t b" style="left:1737px;top:78px;">Aktionen</div>
<div class="a" style="left:1732px;top:96px;width:1186px;height:26px;background:linear-gradient(#c9dcf1,#b4cdea 50%,#a3bfe2)"></div>
<div class="t " style="left:1739px;top:100px;transform:scaleX(1.0050);transform-origin:0 0;">Datenträgerverwaltung</div>
<svg style="left:1901px;top:105px" width="11" height="7" viewBox="0 0 11 7"><path d="M0.5 6.5 L5.5 1 L10.5 6.5Z" fill="#000"/></svg>
<div class="t " style="left:1763px;top:125px;transform:scaleX(1.0057);transform-origin:0 0;">Weitere Aktionen</div>
<svg style="left:1905px;top:128px" width="6" height="10" viewBox="0 0 6 10"><path d="M0.5 0.5 L5.5 5 L0.5 9.5Z" fill="#000"/></svg>
<div class="a" style="left:0px;top:1017px;width:1920px;height:1px;background:#8f8f8f"></div>
<div class="a" style="left:0px;top:1018px;width:1920px;height:22px;background:#efebea"></div>
<div class="a" style="left:1699px;top:1018px;width:1px;height:22px;background:#d6d2d0"></div>
<div class="a" style="left:1832px;top:1018px;width:1px;height:22px;background:#d6d2d0"></div>
<div class="a" style="left:1917px;top:1018px;width:1px;height:22px;background:#d6d2d0"></div>
<div class="a" style="left:1863px;top:18px;width:57px;height:19px;background:linear-gradient(#fffffa,#fafadc);border:1px solid #6e6e6e"></div>
<div class="t " style="left:1867px;top:19px;transform:scaleX(0.9370);transform-origin:0 0;">Schließen</div>
<div class="a" style="left:0px;top:1040px;width:1920px;height:40px;background:linear-gradient(90deg,#a8bfdc 0,#a7c0dd 1660px,#8ca2bd 1690px,#7a8ea8 1705px,#7a8ea8 1920px)"></div>
<div class="a" style="left:0px;top:1040px;width:1920px;height:1px;background:#3f4f60"></div>
<div class="a" style="left:0px;top:1041px;width:1920px;height:1px;background:rgba(255,255,255,.35)"></div>
<div class="a" style="left:0px;top:1041px;width:135px;height:39px;background:linear-gradient(90deg,rgba(70,85,110,.35),rgba(70,85,110,.2) 60px,rgba(70,85,110,0))"></div>
<svg style="left:8px;top:1041px" width="38" height="38" viewBox="0 0 38 38"><defs><radialGradient id="orb" cx="0.5" cy="0.85" r="0.7"><stop offset="0" stop-color="#18d8f8"/><stop offset="0.35" stop-color="#1a88c8"/><stop offset="0.7" stop-color="#0f4a88"/><stop offset="1" stop-color="#153a66"/></radialGradient><linearGradient id="orbg" x1="0" y1="0" x2="0" y2="1"><stop offset="0" stop-color="#e4ecf2" stop-opacity=".9"/><stop offset="1" stop-color="#9ab4cc" stop-opacity=".45"/></linearGradient></defs><circle cx="19" cy="19" r="18" fill="url(#orb)" stroke="#203a58" stroke-width="1"/><path d="M2.5 19 Q3 3 19 1.5 Q35 3 35.5 19 Q27 14.5 19 18.5 Q11 22.5 2.5 19Z" fill="url(#orbg)"/><path d="M11 9 Q15 6.5 19.5 9 L18 17 Q14 14.5 9.5 17Z" fill="#f0561e"/><path d="M21 9.5 Q25.5 12 30 9.5 L28.5 17.5 Q24 20 19.5 17.5Z" fill="#78c02e"/><path d="M9.3 18.5 Q13.8 16 18 18.5 L16.5 26.5 Q12 24 7.8 26.5Z" fill="#3aa6ec"/><path d="M19.3 19 Q23.8 21.5 28.3 19 L26.8 27 Q22.3 29.5 17.8 27Z" fill="#f8c21c"/><path d="M12 10 Q15 8.5 18.5 10 L18 12 Q15 11 11.6 12.5Z" fill="#fff" opacity=".3"/></svg>
<div class="a" style="left:58px;top:1046px;width:1.7px;height:1.7px;background:#1e2832;box-shadow:1px 1px 0 rgba(255,255,255,.3)"></div>
<div class="a" style="left:61.5px;top:1046px;width:1.7px;height:1.7px;background:#1e2832;box-shadow:1px 1px 0 rgba(255,255,255,.3)"></div>
<div class="a" style="left:65px;top:1046px;width:1.7px;height:1.7px;background:#1e2832;box-shadow:1px 1px 0 rgba(255,255,255,.3)"></div>
<div class="a" style="left:58px;top:1050px;width:1.7px;height:1.7px;background:#1e2832;box-shadow:1px 1px 0 rgba(255,255,255,.3)"></div>
<div class="a" style="left:61.5px;top:1050px;width:1.7px;height:1.7px;background:#1e2832;box-shadow:1px 1px 0 rgba(255,255,255,.3)"></div>
<div class="a" style="left:65px;top:1050px;width:1.7px;height:1.7px;background:#1e2832;box-shadow:1px 1px 0 rgba(255,255,255,.3)"></div>
<div class="a" style="left:58px;top:1054px;width:1.7px;height:1.7px;background:#1e2832;box-shadow:1px 1px 0 rgba(255,255,255,.3)"></div>
<div class="a" style="left:61.5px;top:1054px;width:1.7px;height:1.7px;background:#1e2832;box-shadow:1px 1px 0 rgba(255,255,255,.3)"></div>
<div class="a" style="left:65px;top:1054px;width:1.7px;height:1.7px;background:#1e2832;box-shadow:1px 1px 0 rgba(255,255,255,.3)"></div>
<div class="a" style="left:58px;top:1058px;width:1.7px;height:1.7px;background:#1e2832;box-shadow:1px 1px 0 rgba(255,255,255,.3)"></div>
<div class="a" style="left:61.5px;top:1058px;width:1.7px;height:1.7px;background:#1e2832;box-shadow:1px 1px 0 rgba(255,255,255,.3)"></div>
<div class="a" style="left:65px;top:1058px;width:1.7px;height:1.7px;background:#1e2832;box-shadow:1px 1px 0 rgba(255,255,255,.3)"></div>
<div class="a" style="left:58px;top:1062px;width:1.7px;height:1.7px;background:#1e2832;box-shadow:1px 1px 0 rgba(255,255,255,.3)"></div>
<div class="a" style="left:61.5px;top:1062px;width:1.7px;height:1.7px;background:#1e2832;box-shadow:1px 1px 0 rgba(255,255,255,.3)"></div>
<div class="a" style="left:65px;top:1062px;width:1.7px;height:1.7px;background:#1e2832;box-shadow:1px 1px 0 rgba(255,255,255,.3)"></div>
<div class="a" style="left:58px;top:1066px;width:1.7px;height:1.7px;background:#1e2832;box-shadow:1px 1px 0 rgba(255,255,255,.3)"></div>
<div class="a" style="left:61.5px;top:1066px;width:1.7px;height:1.7px;background:#1e2832;box-shadow:1px 1px 0 rgba(255,255,255,.3)"></div>
<div class="a" style="left:65px;top:1066px;width:1.7px;height:1.7px;background:#1e2832;box-shadow:1px 1px 0 rgba(255,255,255,.3)"></div>
<div class="a" style="left:58px;top:1070px;width:1.7px;height:1.7px;background:#1e2832;box-shadow:1px 1px 0 rgba(255,255,255,.3)"></div>
<div class="a" style="left:61.5px;top:1070px;width:1.7px;height:1.7px;background:#1e2832;box-shadow:1px 1px 0 rgba(255,255,255,.3)"></div>
<div class="a" style="left:65px;top:1070px;width:1.7px;height:1.7px;background:#1e2832;box-shadow:1px 1px 0 rgba(255,255,255,.3)"></div>
<div class="a" style="left:58px;top:1074px;width:1.7px;height:1.7px;background:#1e2832;box-shadow:1px 1px 0 rgba(255,255,255,.3)"></div>
<div class="a" style="left:61.5px;top:1074px;width:1.7px;height:1.7px;background:#1e2832;box-shadow:1px 1px 0 rgba(255,255,255,.3)"></div>
<div class="a" style="left:65px;top:1074px;width:1.7px;height:1.7px;background:#1e2832;box-shadow:1px 1px 0 rgba(255,255,255,.3)"></div>
<svg style="left:90px;top:1047px" width="30" height="28" viewBox="0 0 30 28"><rect x="3" y="2" width="22" height="24" fill="#bfe0f8" stroke="#8ab8e0"/><rect x="6" y="3" width="20" height="23" fill="#d8ecfa" opacity=".6"/><circle cx="12.5" cy="13" r="9" fill="#f07a1a" stroke="#d05a10"/><path d="M9.5 8 L17.5 13 L9.5 18Z" fill="#fff"/></svg>
<div class="a" style="left:137px;top:1041px;width:60px;height:39px;background:linear-gradient(rgba(255,255,255,.6),rgba(255,255,255,.3) 50%,rgba(255,255,255,.18));border:1px solid #34434f;border-radius:3px;box-shadow:inset 0 0 0 1px rgba(255,255,255,.55)"></div>
<div class="a" style="left:200px;top:1041px;width:54px;height:39px;background:linear-gradient(rgba(255,255,255,.6),rgba(255,255,255,.3) 50%,rgba(255,255,255,.18));border:1px solid #34434f;border-radius:3px;box-shadow:inset 0 0 0 1px rgba(255,255,255,.55)"></div>
<div class="a" style="left:253px;top:1042px;width:5px;height:37px;background:rgba(255,255,255,.3);border:1px solid #34434f;border-left:none;border-radius:0 3px 3px 0"></div>
<div class="a" style="left:261px;top:1041px;width:60px;height:39px;background:linear-gradient(#f2f5fa,#dfe7f1 45%,#cfdbea);border:1px solid #34434f;border-radius:3px;box-shadow:inset 0 0 0 1px rgba(255,255,255,.55)"></div>
<svg style="left:150px;top:1046px" width="34" height="31" viewBox="0 0 34 31"><defs><linearGradient id="fy" x1="0" y1="0" x2="0" y2="1"><stop offset="0" stop-color="#fbe9a8"/><stop offset="1" stop-color="#e8c160"/></linearGradient><linearGradient id="fb" x1="0" y1="0" x2="0" y2="1"><stop offset="0" stop-color="#c8ecfc"/><stop offset="1" stop-color="#5cb0e8"/></linearGradient></defs><path d="M2 3 H11 L13 1 H20 L21 3 H31 V28 H2Z" fill="#f0d68c" stroke="#c9a24a"/><path d="M12 4 H21 L22 6 H32 V28 H12Z" fill="#fff6d8" stroke="#d8b860" stroke-width=".6"/><path d="M1.5 8 H32.5 V28.5 H1.5Z" fill="url(#fy)" stroke="#c9a24a"/><rect x="4" y="1" width="3" height="2" fill="#2ab02a"/><rect x="14" y="3.5" width="3" height="2" fill="#d83030"/><rect x="23" y="5.5" width="3" height="2" fill="#3088e0"/><path d="M5 30.5 V18 Q5 16 7 16 H27 Q29 16 29 18 V30.5 H22 V23 H12 V30.5Z" fill="url(#fb)" stroke="#3a88c8"/></svg>
<svg style="left:209px;top:1047px" width="34" height="30" viewBox="0 0 34 30"><defs><linearGradient id="cpg" x1="0" y1="0" x2="0" y2="1"><stop offset="0" stop-color="#5aa8e8"/><stop offset="1" stop-color="#2a70c0"/></linearGradient></defs><rect x="1.5" y="1.5" width="30" height="21" rx="1" fill="url(#cpg)" stroke="#1a5aa0"/><circle cx="9" cy="9" r="4.3" fill="none" stroke="#e8f4ff" stroke-width="1.4"/><path d="M9 3.8 A5.2 5.2 0 0 1 14.2 9 H9Z" fill="#f8a018"/><rect x="17" y="6" width="11" height="4" fill="#9fd0f4" stroke="#1a4a90" stroke-width=".7"/><rect x="22" y="7" width="5" height="2" fill="#1a5ab0"/><rect x="17" y="13" width="11" height="4" fill="#9fd0f4" stroke="#1a4a90" stroke-width=".7"/><rect x="22" y="14" width="5" height="2" fill="#1a5ab0"/><circle cx="6" cy="17" r="1.1" fill="#bff"/><circle cx="10" cy="17" r="1.1" fill="#fc4"/><ellipse cx="15.5" cy="25.5" rx="7" ry="4.5" fill="#e4e4e4" stroke="#9a9a9a"/></svg>
<svg style="left:274px;top:1043px" width="34" height="34" viewBox="0 0 34 34"><defs><linearGradient id="scr" x1="0" y1="0" x2="1" y2="0"><stop offset="0" stop-color="#0a1ab8"/><stop offset="0.5" stop-color="#1a36e0"/><stop offset="0.55" stop-color="#8a9ef0"/><stop offset="1" stop-color="#c8d0f8"/></linearGradient><linearGradient id="tbx" x1="0" y1="0" x2="0" y2="1"><stop offset="0" stop-color="#c8ccd0"/><stop offset="1" stop-color="#7a8288"/></linearGradient></defs><path d="M4 11 L11 10 L11 21 L4 21Z" fill="#e4e0d4" stroke="#b0aa98" stroke-width=".6"/><rect x="4.5" y="11.5" width="1.5" height="2" fill="#333"/><path d="M11 1.5 L31 4.5 L31 21 L11 18Z" fill="#e8ecf4" stroke="#9aa0b0" stroke-width=".8"/><path d="M12 3.5 L30 6 L30 20 L12 17Z" fill="url(#scr)"/><path d="M1.5 19 L20 17 L24 21 L24 32 L1.5 30Z" fill="url(#tbx)" stroke="#6a7076" stroke-width=".7"/><path d="M1.5 19 L20 17 L24 21 L5 23Z" fill="#d8dcdf"/><rect x="6" y="23" width="2" height="4" rx="1" fill="#f4f4f4" stroke="#333" stroke-width=".5"/><rect x="14" y="24" width="2" height="4" rx="1" fill="#f4f4f4" stroke="#333" stroke-width=".5"/><path d="M8 19 Q11 15 14 18" stroke="#222" stroke-width=".8" fill="none"/></svg>
<div class="a" style="left:1713px;top:1046px;width:1.7px;height:1.7px;background:#1e2832;box-shadow:1px 1px 0 rgba(255,255,255,.3)"></div>
<div class="a" style="left:1716.5px;top:1046px;width:1.7px;height:1.7px;background:#1e2832;box-shadow:1px 1px 0 rgba(255,255,255,.3)"></div>
<div class="a" style="left:1720px;top:1046px;width:1.7px;height:1.7px;background:#1e2832;box-shadow:1px 1px 0 rgba(255,255,255,.3)"></div>
<div class="a" style="left:1713px;top:1050px;width:1.7px;height:1.7px;background:#1e2832;box-shadow:1px 1px 0 rgba(255,255,255,.3)"></div>
<div class="a" style="left:1716.5px;top:1050px;width:1.7px;height:1.7px;background:#1e2832;box-shadow:1px 1px 0 rgba(255,255,255,.3)"></div>
<div class="a" style="left:1720px;top:1050px;width:1.7px;height:1.7px;background:#1e2832;box-shadow:1px 1px 0 rgba(255,255,255,.3)"></div>
<div class="a" style="left:1713px;top:1054px;width:1.7px;height:1.7px;background:#1e2832;box-shadow:1px 1px 0 rgba(255,255,255,.3)"></div>
<div class="a" style="left:1716.5px;top:1054px;width:1.7px;height:1.7px;background:#1e2832;box-shadow:1px 1px 0 rgba(255,255,255,.3)"></div>
<div class="a" style="left:1720px;top:1054px;width:1.7px;height:1.7px;background:#1e2832;box-shadow:1px 1px 0 rgba(255,255,255,.3)"></div>
<div class="a" style="left:1713px;top:1058px;width:1.7px;height:1.7px;background:#1e2832;box-shadow:1px 1px 0 rgba(255,255,255,.3)"></div>
<div class="a" style="left:1716.5px;top:1058px;width:1.7px;height:1.7px;background:#1e2832;box-shadow:1px 1px 0 rgba(255,255,255,.3)"></div>
<div class="a" style="left:1720px;top:1058px;width:1.7px;height:1.7px;background:#1e2832;box-shadow:1px 1px 0 rgba(255,255,255,.3)"></div>
<div class="a" style="left:1713px;top:1062px;width:1.7px;height:1.7px;background:#1e2832;box-shadow:1px 1px 0 rgba(255,255,255,.3)"></div>
<div class="a" style="left:1716.5px;top:1062px;width:1.7px;height:1.7px;background:#1e2832;box-shadow:1px 1px 0 rgba(255,255,255,.3)"></div>
<div class="a" style="left:1720px;top:1062px;width:1.7px;height:1.7px;background:#1e2832;box-shadow:1px 1px 0 rgba(255,255,255,.3)"></div>
<div class="a" style="left:1713px;top:1066px;width:1.7px;height:1.7px;background:#1e2832;box-shadow:1px 1px 0 rgba(255,255,255,.3)"></div>
<div class="a" style="left:1716.5px;top:1066px;width:1.7px;height:1.7px;background:#1e2832;box-shadow:1px 1px 0 rgba(255,255,255,.3)"></div>
<div class="a" style="left:1720px;top:1066px;width:1.7px;height:1.7px;background:#1e2832;box-shadow:1px 1px 0 rgba(255,255,255,.3)"></div>
<div class="a" style="left:1713px;top:1070px;width:1.7px;height:1.7px;background:#1e2832;box-shadow:1px 1px 0 rgba(255,255,255,.3)"></div>
<div class="a" style="left:1716.5px;top:1070px;width:1.7px;height:1.7px;background:#1e2832;box-shadow:1px 1px 0 rgba(255,255,255,.3)"></div>
<div class="a" style="left:1720px;top:1070px;width:1.7px;height:1.7px;background:#1e2832;box-shadow:1px 1px 0 rgba(255,255,255,.3)"></div>
<div class="a" style="left:1713px;top:1074px;width:1.7px;height:1.7px;background:#1e2832;box-shadow:1px 1px 0 rgba(255,255,255,.3)"></div>
<div class="a" style="left:1716.5px;top:1074px;width:1.7px;height:1.7px;background:#1e2832;box-shadow:1px 1px 0 rgba(255,255,255,.3)"></div>
<div class="a" style="left:1720px;top:1074px;width:1.7px;height:1.7px;background:#1e2832;box-shadow:1px 1px 0 rgba(255,255,255,.3)"></div>
<div class="t " style="left:1730px;top:1049px;transform:scaleX(0.8997);transform-origin:0 0;color:#f4f6fa">DE</div>
<svg style="left:1761px;top:1058px" width="10" height="6" viewBox="0 0 10 6"><path d="M0.5 5.5 L5 1 L9.5 5.5Z" fill="#eef3f8" stroke="#556" stroke-width=".5"/></svg>
<svg style="left:1782px;top:1053px" width="16" height="16" viewBox="0 0 16 16"><rect x="5" y="4" width="10" height="8" fill="#5a6878" stroke="#f4f4f4" stroke-width="1.4"/><path d="M9 12 V14 M6 15 H13" stroke="#f4f4f4" stroke-width="1.2"/><path d="M2 1 V8 M4 1 V8 M1 5 H5 M3 8 V15" stroke="#f4f4f4" stroke-width="1.2"/></svg>
<svg style="left:1806px;top:1053px" width="18" height="16" viewBox="0 0 18 16"><path d="M1 5.5 H4.5 L9 1 V15 L4.5 10.5 H1Z" fill="#eef2f6" stroke="#4a5560" stroke-width=".7"/><path d="M11 5 Q12.8 8 11 11 M13.5 3 Q16.3 8 13.5 13" stroke="#eef2f6" stroke-width="1.4" fill="none"/></svg>
<div class="t " style="left:1853px;top:1045px;transform:scaleX(0.8662);transform-origin:0 0;color:#f4f6fa">16:07</div>
<div class="t " style="left:1840px;top:1062px;transform:scaleX(0.8662);transform-origin:0 0;color:#f4f6fa">29.10.2014</div>
<div class="a" style="left:1906px;top:1041px;width:14px;height:39px;background:linear-gradient(90deg,#8092a8,#6a7a8e);border:1px solid #3c4a5a;box-shadow:inset 1px 1px 0 rgba(255,255,255,.4)"></div>
</body></html>
